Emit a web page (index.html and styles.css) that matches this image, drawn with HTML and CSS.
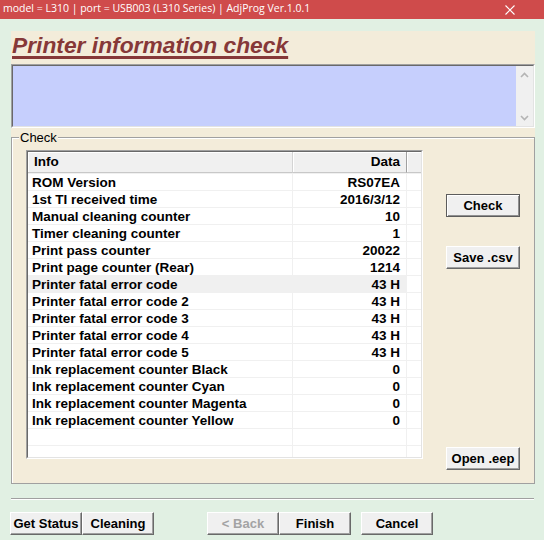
FILE: index.html
```html
<!DOCTYPE html>
<html>
<head>
<meta charset="utf-8">
<link rel="stylesheet" href="styles.css">
</head>
<body>
<div class="titlebar">
  <span class="title-text">model = L310 | port = USB003 (L310 Series) | AdjProg Ver.1.0.1</span>
  <svg class="close" width="10" height="10" viewBox="0 0 10 10"><path d="M0.5 0.5 L9.5 9.5 M9.5 0.5 L0.5 9.5" stroke="#fff" stroke-width="1.1" fill="none"/></svg>
</div>
<div class="client">
  <div class="panel">
    <div class="heading"><span>Printer information check</span></div>
    <div class="memo">
      <div class="memo-inner">
        <div class="memo-text"></div>
        <div class="vscroll">
          <svg width="9" height="6" viewBox="0 0 9 6"><path d="M1 5 L4.5 1.5 L8 5" stroke="#b4b4b4" stroke-width="1.6" fill="none"/></svg>
          <svg width="9" height="6" viewBox="0 0 9 6"><path d="M1 1 L4.5 4.5 L8 1" stroke="#b4b4b4" stroke-width="1.6" fill="none"/></svg>
        </div>
      </div>
    </div>
    <div class="group">
      <span class="group-label">Check</span>
      <div class="group-body">
        <div class="listview">
          <div class="lv-inner">
            <div class="lv-header">
              <div class="hc c1">Info</div>
              <div class="hc c2">Data</div>
              <div class="hc c3"></div>
            </div>
            <div class="lv-rows">
              <div class="row"><div class="c1">ROM Version</div><div class="c2">RS07EA</div><div class="c3"></div></div>
              <div class="row"><div class="c1">1st TI received time</div><div class="c2">2016/3/12</div><div class="c3"></div></div>
              <div class="row"><div class="c1">Manual cleaning counter</div><div class="c2">10</div><div class="c3"></div></div>
              <div class="row"><div class="c1">Timer cleaning counter</div><div class="c2">1</div><div class="c3"></div></div>
              <div class="row"><div class="c1">Print pass counter</div><div class="c2">20022</div><div class="c3"></div></div>
              <div class="row"><div class="c1">Print page counter (Rear)</div><div class="c2">1214</div><div class="c3"></div></div>
              <div class="row sel"><div class="c1">Printer fatal error code</div><div class="c2">43 H</div><div class="c3"></div></div>
              <div class="row"><div class="c1">Printer fatal error code 2</div><div class="c2">43 H</div><div class="c3"></div></div>
              <div class="row"><div class="c1">Printer fatal error code 3</div><div class="c2">43 H</div><div class="c3"></div></div>
              <div class="row"><div class="c1">Printer fatal error code 4</div><div class="c2">43 H</div><div class="c3"></div></div>
              <div class="row"><div class="c1">Printer fatal error code 5</div><div class="c2">43 H</div><div class="c3"></div></div>
              <div class="row"><div class="c1">Ink replacement counter Black</div><div class="c2">0</div><div class="c3"></div></div>
              <div class="row"><div class="c1">Ink replacement counter Cyan</div><div class="c2">0</div><div class="c3"></div></div>
              <div class="row"><div class="c1">Ink replacement counter Magenta</div><div class="c2">0</div><div class="c3"></div></div>
              <div class="row"><div class="c1">Ink replacement counter Yellow</div><div class="c2">0</div><div class="c3"></div></div>
              <div class="row"><div class="c1"></div><div class="c2"></div><div class="c3"></div></div>
              <div class="row"><div class="c1"></div><div class="c2"></div><div class="c3"></div></div>
            </div>
          </div>
        </div>
        <div class="side">
          <button class="btn side-btn default btn-check">Check</button>
          <button class="btn side-btn btn-save">Save .csv</button>
          <button class="btn side-btn btn-open">Open .eep</button>
        </div>
      </div>
    </div>
  </div>
  <div class="separator"></div>
  <div class="bottom-bar">
    <button class="btn bar-btn">Get Status</button>
    <button class="btn bar-btn">Cleaning</button>
    <button class="btn bar-btn disabled btn-back">&lt; Back</button>
    <button class="btn bar-btn">Finish</button>
    <button class="btn bar-btn btn-cancel">Cancel</button>
  </div>
</div>
</body>
</html>
```

FILE: styles.css
```css
* { box-sizing: border-box; }
html, body { margin: 0; padding: 0; }
body {
  width: 544px;
  height: 540px;
  background: #e1f0e3;
  font-family: "Liberation Sans", Arial, sans-serif;
  overflow: hidden;
}
.titlebar {
  height: 19px;
  background: #cf4b4b;
  display: flex;
  align-items: center;
  justify-content: space-between;
  padding-left: 3px;
  padding-right: 29px;
}
.title-text {
  align-self: flex-start;
  color: #fff;
  font-family: "Open Sans", "Noto Sans", sans-serif;
  font-size: 10.5px;
  line-height: 16px;
  white-space: nowrap;
}
.close { display: block; }
.client { padding-top: 12px; }
.panel {
  margin-left: 11px;
  width: 524px;
  background: #f3ecda;
}
.heading {
  height: 33px;
  padding: 1px 0 0 1px;
}
.heading span {
  font-family: "Liberation Sans", Arial, sans-serif;
  font-size: 22.8px;
  font-weight: bold;
  font-style: italic;
  color: #863838;
  line-height: 26px;
  text-decoration: underline;
  text-decoration-thickness: 3px;
  text-underline-offset: 3px;
}
.memo {
  height: 64px;
  border: 1px solid;
  border-color: #a0a0a0 #ffffff #ffffff #a0a0a0;
}
.memo-inner {
  height: 100%;
  display: flex;
  border: 1px solid;
  border-color: #696969 #e3e3e3 #e3e3e3 #696969;
  background: #c6cffd;
}
.memo-text { flex: 1; }
.vscroll {
  width: 17px;
  background: #f0f0f0;
  display: flex;
  flex-direction: column;
  justify-content: space-between;
  align-items: center;
  padding: 6px 0 5px;
}
.vscroll svg { display: block; }
.group {
  position: relative;
  margin-top: 9px;
  border: 1px solid #a0a0a0;
  box-shadow: inset 1px 1px 0 #ffffff;
  padding: 12px 14px 13px 14px;
}
.group-label {
  position: absolute;
  left: 7px;
  top: -8px;
  padding: 0 1px;
  background: #f3ecda;
  font-size: 13px;
  line-height: 15px;
  color: #000;
}
.group-body {
  display: flex;
  height: 320px;
}
.listview {
  width: 397px;
  height: 309px;
  border: 1px solid;
  border-color: #a0a0a0 #ffffff #ffffff #a0a0a0;
}
.lv-inner {
  height: 100%;
  border: 1px solid;
  border-color: #696969 #e3e3e3 #e3e3e3 #696969;
  background: #fff;
  overflow: hidden;
}
.lv-header {
  display: flex;
  height: 21px;
}
.hc {
  background: #f0f0f0;
  box-shadow: inset 1px 1px 0 #ffffff;
  border-bottom: 1px solid #c8c8c8;
  font-size: 13.5px;
  font-weight: bold;
  line-height: 20px;
  color: #000;
  white-space: nowrap;
}
.lv-header .c1 { width: 265px; border-right: 1px solid #d4d4d4; padding-left: 6px; }
.lv-header .c2 { width: 114px; border-right: 1px solid #a0a0a0; text-align: right; padding-right: 6px; }
.lv-header .c3 { flex: 1; }
.lv-rows { border-top: 1px solid #f0f0f0; }
.row {
  display: flex;
  height: 17px;
  border-bottom: 1px solid #f0f0f0;
}
.row > div {
  font-size: 13.5px;
  font-weight: bold;
  line-height: 15px;
  padding-top: 1px;
  color: #000;
  white-space: nowrap;
}
.row .c1 { width: 265px; border-right: 1px solid #f0f0f0; padding-left: 4px; }
.row .c2 { width: 114px; border-right: 1px solid #f0f0f0; text-align: right; padding-right: 6px; }
.row .c3 { flex: 1; }
.row.sel .c1, .row.sel .c2 { background: #f0f0f0; }
.side {
  margin-left: 23px;
  width: 74px;
  display: flex;
  flex-direction: column;
}
.btn {
  font-family: "Liberation Sans", Arial, sans-serif;
  font-size: 13px;
  font-weight: bold;
  color: #000;
  background: #f0f0f0;
  border: 1px solid;
  border-color: #ffffff #696969 #696969 #ffffff;
  box-shadow: inset -1px -1px 0 #a0a0a0;
  padding: 0;
  display: flex;
  align-items: center;
  justify-content: center;
  white-space: nowrap;
}
.side-btn { width: 74px; height: 23px; }
.btn.default {
  border: 1px solid #5c5c5c;
  box-shadow: inset 1px 1px 0 #ffffff, inset -1px -1px 0 #909090;
}
.btn-check { margin-top: 44px; }
.btn-save { margin-top: 29px; }
.btn-open { margin-top: auto; }
.separator {
  margin: 14px 0 0 11px;
  width: 523px;
  height: 2px;
  border-top: 1px solid #a0a0a0;
  border-bottom: 1px solid #ffffff;
}
.bottom-bar {
  display: flex;
  margin-top: 12px;
  padding-left: 10px;
}
.bar-btn { width: 72px; height: 23px; }
.btn.disabled { color: #a3a3a3; }
.btn-back { margin-left: 53px; }
.btn-cancel { margin-left: 10px; }
```
